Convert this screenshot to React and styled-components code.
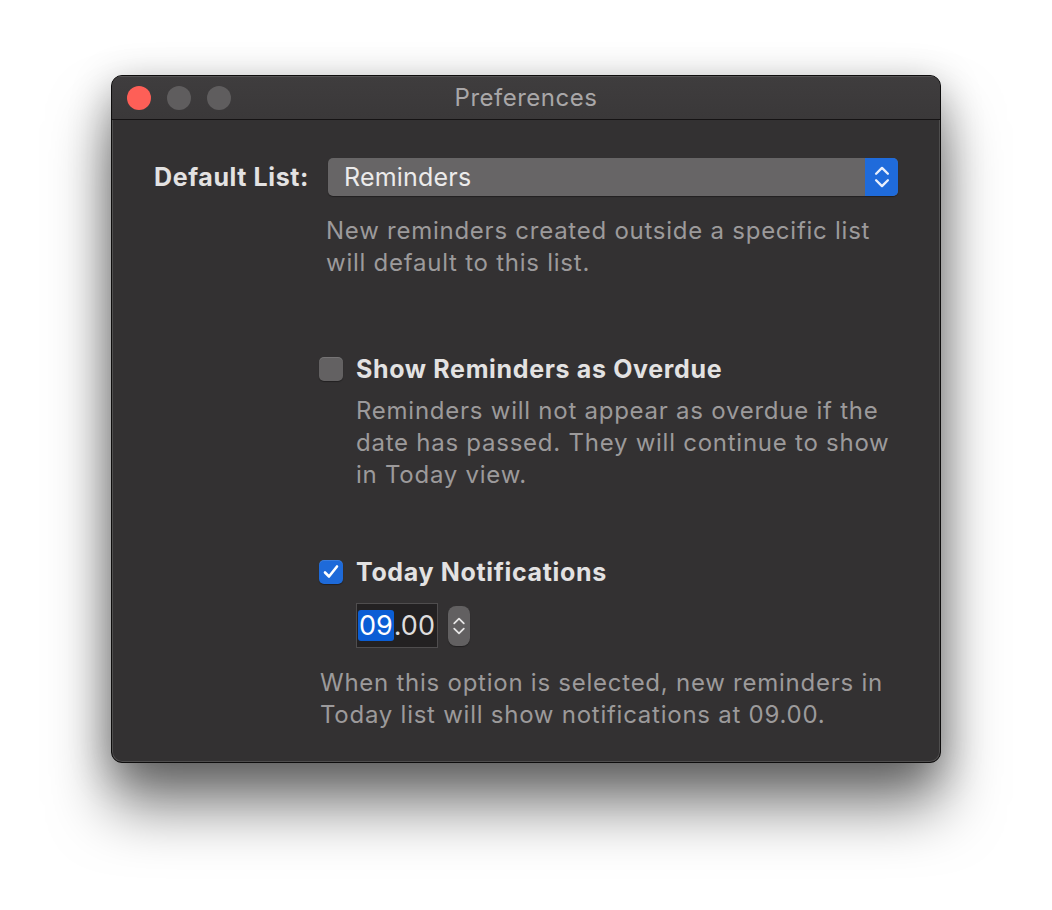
import React from "react";
import styled, { createGlobalStyle } from "styled-components";

const Global = createGlobalStyle`
  html, body {
    margin: 0;
    padding: 0;
    background: #ffffff;
  }
  body {
    font-family: "Inter", "Noto Sans", sans-serif;
    -webkit-font-smoothing: antialiased;
  }
`;

const Page = styled.div`
  display: flex;
  justify-content: center;
  padding-top: 75px;
  height: 910px;
  box-sizing: border-box;
`;

const Window = styled.div`
  width: 830px;
  height: 688px;
  box-sizing: border-box;
  display: flex;
  flex-direction: column;
  background: #333132;
  border: 1px solid #0e0d0d;
  border-radius: 11px;
  overflow: hidden;
  box-shadow:
    inset 0 0 0 1px rgba(255, 255, 255, 0.14),
    0 44px 60px rgba(0, 0, 0, 0.5),
    0 10px 40px rgba(0, 0, 0, 0.3);
`;

const TitleBar = styled.div`
  position: relative;
  height: 43px;
  flex: none;
  display: flex;
  align-items: center;
  padding-left: 15px;
  gap: 16px;
  background: linear-gradient(#3f3d3e, #3a3839);
  border-bottom: 1px solid #151314;
  box-shadow: inset 0 1px 0 rgba(255, 255, 255, 0.12);
`;

const Light = styled.span`
  width: 24px;
  height: 24px;
  border-radius: 50%;
  background: ${(p) => p.$color};
  flex: none;
`;

const Title = styled.div`
  position: absolute;
  left: 0;
  right: 0;
  top: 0;
  bottom: 0;
  display: flex;
  align-items: center;
  justify-content: center;
  color: #a9a7a8;
  font-size: 24px;
  letter-spacing: 0.5px;
  pointer-events: none;
`;

const Content = styled.div`
  padding: 38px 42px 0 40px;
  display: flex;
  flex-direction: column;
`;

const ListRow = styled.div`
  display: flex;
  align-items: center;
`;

const FieldLabel = styled.div`
  width: 157px;
  text-align: right;
  color: #e3e2e2;
  font-weight: 700;
  font-size: 25px;
  letter-spacing: 0.6px;
  white-space: nowrap;
`;

const Popup = styled.div`
  margin-left: 19px;
  flex: 1;
  height: 38px;
  display: flex;
  align-items: stretch;
  background: #676566;
  border-radius: 5px;
  overflow: hidden;
  box-shadow: 0 1px 1px rgba(0, 0, 0, 0.35);
`;

const PopupText = styled.div`
  flex: 1;
  display: flex;
  align-items: center;
  padding-left: 16px;
  color: #ecebeb;
  font-size: 25px;
  letter-spacing: 0.2px;
`;

const PopupArrows = styled.div`
  width: 33px;
  display: flex;
  align-items: center;
  justify-content: center;
  background: #1f6bdb;
`;

const Hint = styled.p`
  margin: ${(p) => p.$margin};
  color: #9c9a9b;
  font-size: 24px;
  letter-spacing: 0.75px;
  line-height: 32px;
  white-space: nowrap;
`;

const Section = styled.div`
  margin-left: 167px;
  display: flex;
  flex-direction: column;
`;

const CheckRow = styled.label`
  display: flex;
  align-items: center;
  gap: 13px;
  height: 32px;
  margin-top: ${(p) => p.$top};
`;

const Box = styled.span`
  width: 24px;
  height: 24px;
  box-sizing: border-box;
  border-radius: 5px;
  flex: none;
  display: flex;
  align-items: center;
  justify-content: center;
  background: ${(p) => (p.$checked ? "#1e6ad9" : "#636162")};
  box-shadow: inset 0 1px 0 rgba(255, 255, 255, 0.12), 0 1px 1px rgba(0, 0, 0, 0.35);
`;

const CheckLabel = styled.span`
  color: #e3e2e2;
  font-weight: 700;
  font-size: 25px;
  letter-spacing: 0.65px;
  white-space: nowrap;
`;

const TimeRow = styled.div`
  margin: 15px 0 0 37px;
  display: flex;
  align-items: center;
  gap: 10px;
`;

const TimeField = styled.div`
  width: 82px;
  height: 45px;
  box-sizing: border-box;
  border: 1px solid #4f4d4e;
  background: #232122;
  display: flex;
  align-items: center;
  padding-left: 1px;
  color: #dedddd;
  font-size: 27px;
`;

const Selected = styled.span`
  background: #0b5ed5;
  color: #ffffff;
  border-radius: 3px;
  padding: 0 1px;
  line-height: 31px;
`;

const Stepper = styled.div`
  width: 22px;
  height: 40px;
  border-radius: 8px;
  background: #626061;
  display: flex;
  align-items: center;
  justify-content: center;
  box-shadow: 0 1px 1px rgba(0, 0, 0, 0.35);
`;

const Chevrons = ({ w = 16, h = 28, color = "#ffffff", sw = 2 }) => (
  <svg width={w} height={h} viewBox="0 0 16 28" fill="none">
    <path d="M2.5 11 L8 5.5 L13.5 11" stroke={color} strokeWidth={sw} strokeLinecap="round" strokeLinejoin="round" />
    <path d="M2.5 17 L8 22.5 L13.5 17" stroke={color} strokeWidth={sw} strokeLinecap="round" strokeLinejoin="round" />
  </svg>
);

const Check = () => (
  <svg width="20" height="20" viewBox="0 0 20 20" fill="none">
    <path d="M4 10.5 L8 14.5 L16 4.5" stroke="#ffffff" strokeWidth="2.6" strokeLinecap="round" strokeLinejoin="round" />
  </svg>
);

export default function App() {
  return (
    <>
      <Global />
      <Page>
        <Window>
          <TitleBar>
            <Light $color="#fe5f57" />
            <Light $color="#5f5d5e" />
            <Light $color="#5f5d5e" />
            <Title>Preferences</Title>
          </TitleBar>
          <Content>
            <ListRow>
              <FieldLabel>Default List:</FieldLabel>
              <Popup>
                <PopupText>Reminders</PopupText>
                <PopupArrows>
                  <Chevrons w={18} h={30} color="#e8effc" sw={2.2} />
                </PopupArrows>
              </Popup>
            </ListRow>
            <Hint $margin="19px 0 0 174px">
              New reminders created outside a specific list
              <br />
              will default to this list.
            </Hint>

            <Section>
              <CheckRow $top="74px">
                <Box />
                <CheckLabel>Show Reminders as Overdue</CheckLabel>
              </CheckRow>
              <Hint $margin="10px 0 0 37px">
                Reminders will not appear as overdue if the
                <br />
                date has passed. They will continue to show
                <br />
                in Today view.
              </Hint>

              <CheckRow $top="65px">
                <Box $checked>
                  <Check />
                </Box>
                <CheckLabel>Today Notifications</CheckLabel>
              </CheckRow>
              <TimeRow>
                <TimeField>
                  <Selected>09</Selected>.00
                </TimeField>
                <Stepper>
                  <Chevrons w={14} h={26} color="#e6e5e5" />
                </Stepper>
              </TimeRow>
              <Hint $margin="19px 0 0 1px">
                When this option is selected, new reminders in
                <br />
                Today list will show notifications at 09.00.
              </Hint>
            </Section>
          </Content>
        </Window>
      </Page>
    </>
  );
}
